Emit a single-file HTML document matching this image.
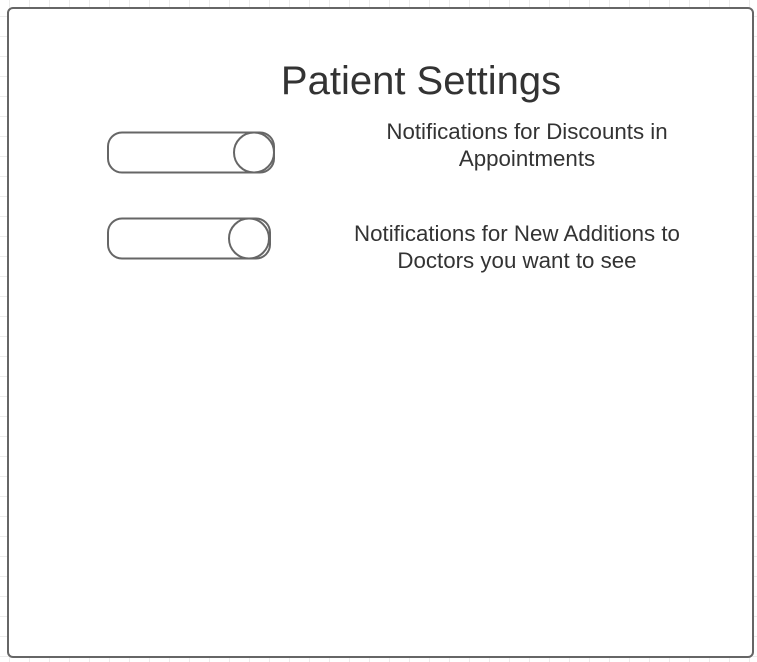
<!DOCTYPE html>
<html><head><style>
body{margin:0;width:757px;height:662px;overflow:hidden;background:#fff;
background-image:linear-gradient(#ececec 1px,transparent 1px),linear-gradient(90deg,#ececec 1px,transparent 1px);
background-size:20px 20px;background-position:9px 16px;font-family:"Liberation Sans",sans-serif;color:#333;position:relative}
.box{position:absolute;left:7px;top:7px;width:743px;height:647px;border:2px solid #666;border-radius:6px;background:#fff}
.t{position:absolute;text-align:center;white-space:nowrap}
</style></head><body>
<div class="box"></div>
<div class="t" style="left:221px;width:400px;top:58px;font-size:40px;line-height:46px">Patient Settings</div>
<div class="t" style="left:327px;width:400px;top:118px;font-size:22.3px;line-height:27px">Notifications for Discounts in<br>Appointments</div>
<div class="t" style="left:317px;width:400px;top:220px;font-size:22.3px;line-height:27px">Notifications for New Additions to<br>Doctors you want to see</div>
<svg style="position:absolute;left:0;top:0" width="757" height="662">
<g fill="none" stroke="#666" stroke-width="2">
<rect x="108" y="132.5" width="166" height="40" rx="14"/>
<circle cx="254" cy="152.5" r="20" fill="#fff"/>
<rect x="108" y="218.5" width="162" height="40" rx="14"/>
<circle cx="249" cy="238.5" r="20" fill="#fff"/>
</g></svg>
</body></html>
